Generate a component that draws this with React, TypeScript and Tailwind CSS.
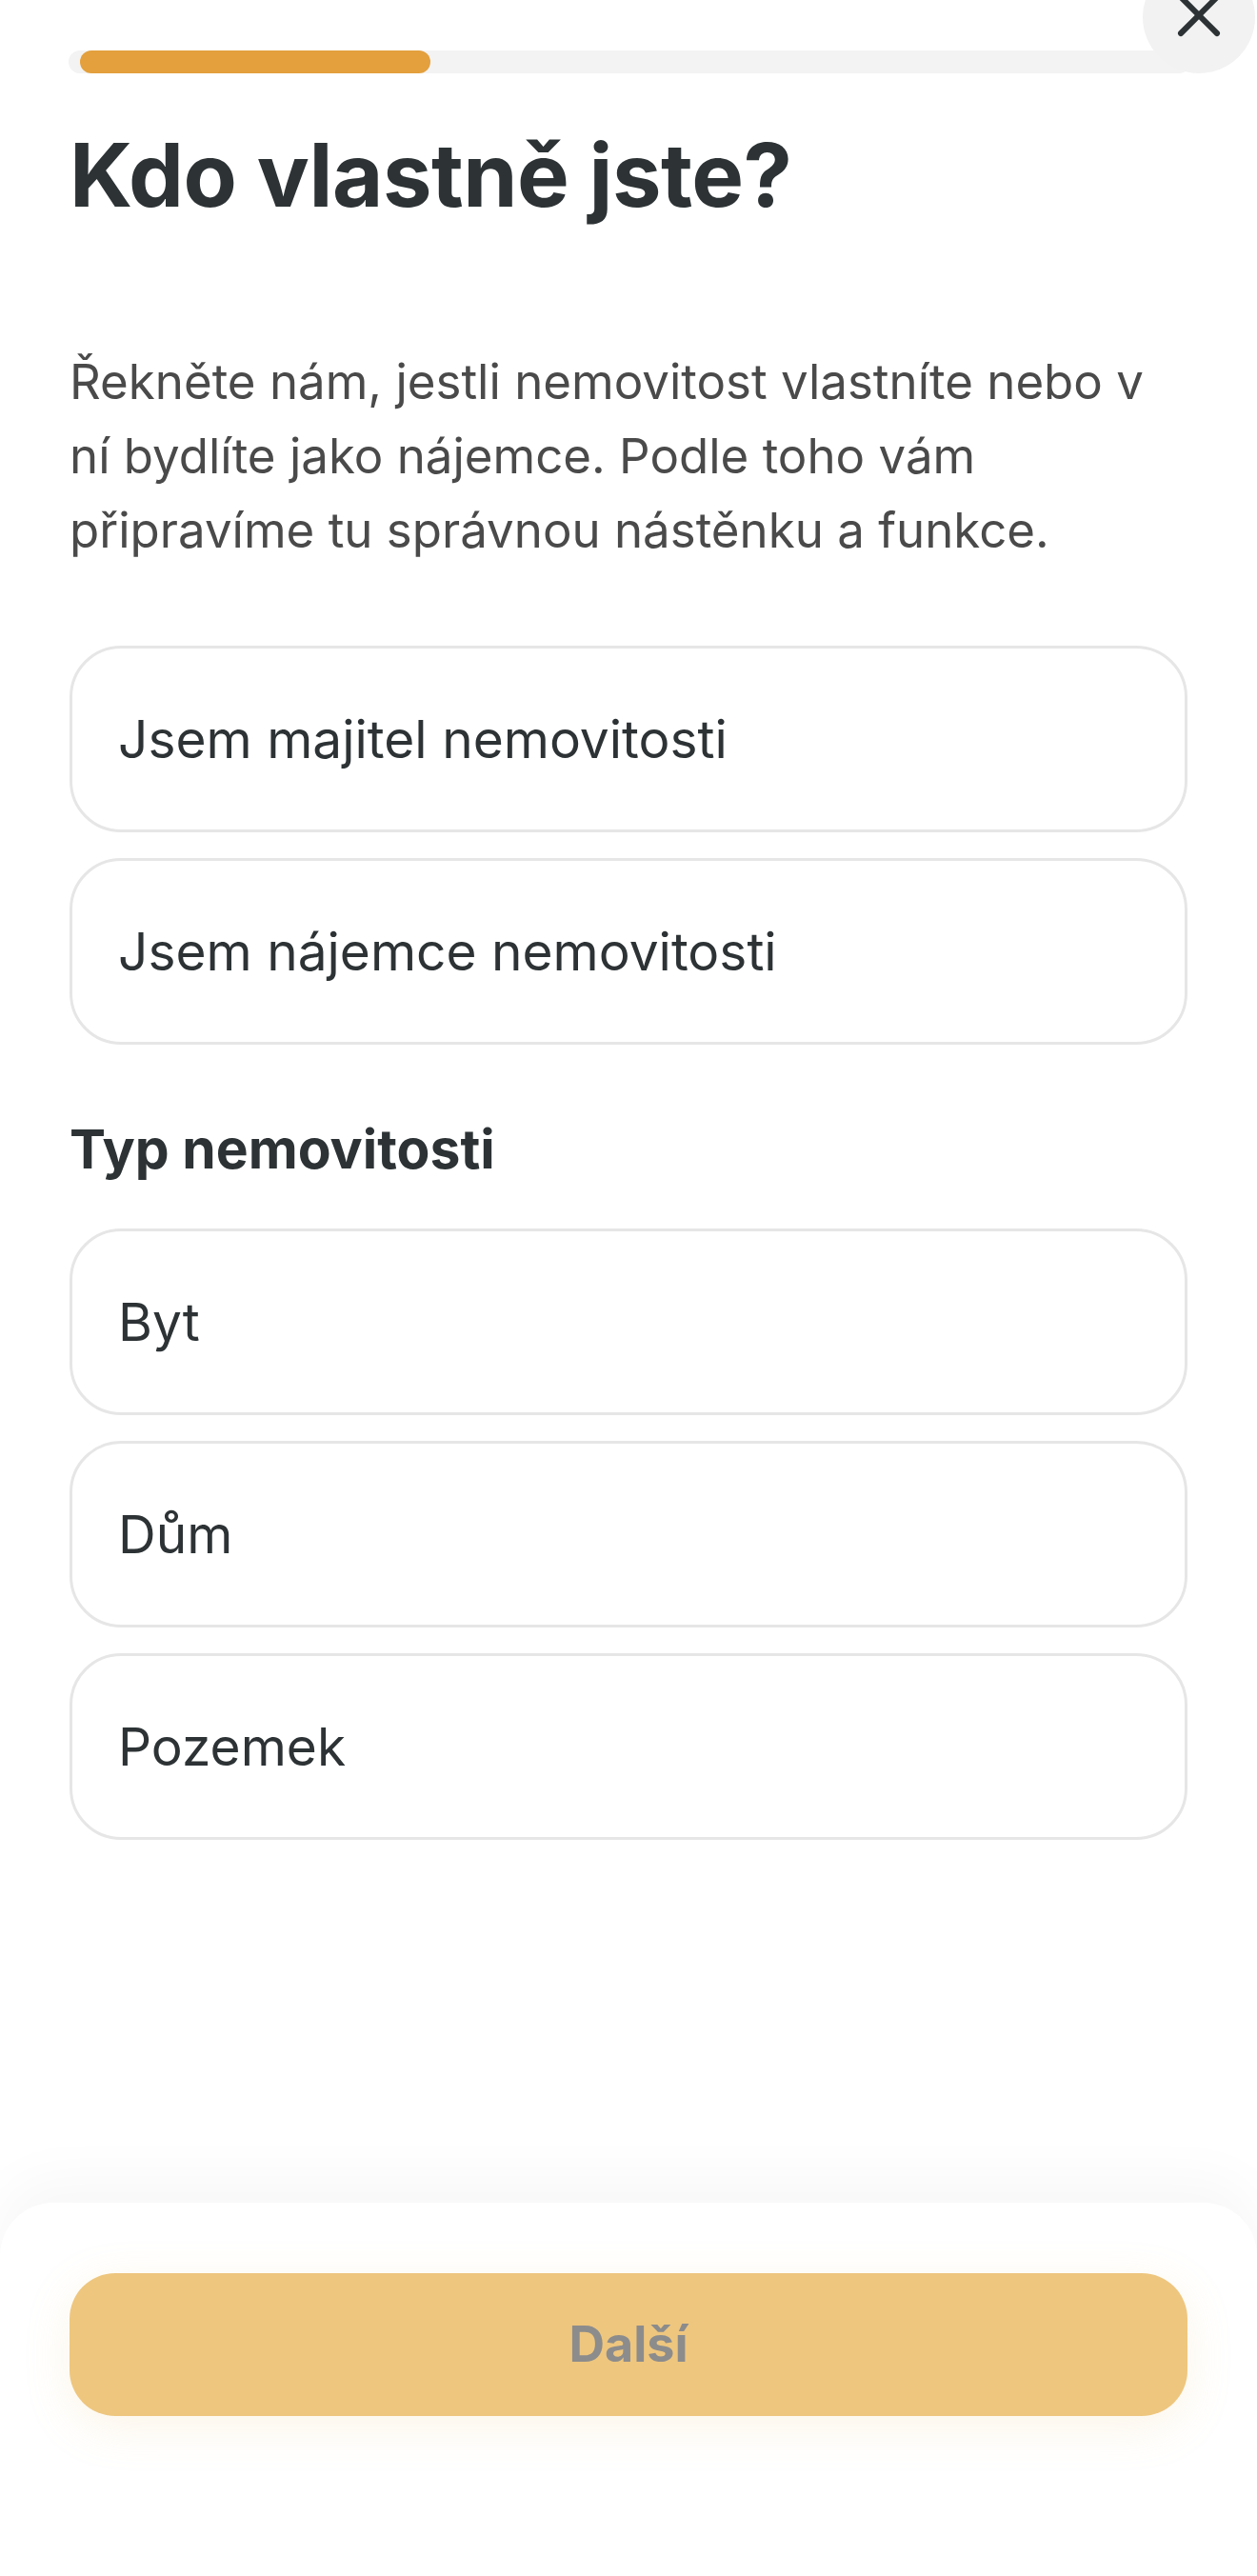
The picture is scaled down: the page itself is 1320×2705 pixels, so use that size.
import { X } from 'lucide-react';

const ownerOptions = ['Jsem majitel nemovitosti', 'Jsem nájemce nemovitosti'];
const propertyTypes = ['Byt', 'Dům', 'Pozemek'];

function OptionCard({ label }: { label: string }) {
  return (
    <button
      type="button"
      className="flex h-[196px] w-full items-center rounded-[54px] border-[3px] border-[#e6e6e6] bg-white px-[48px] text-left text-[55px] leading-none text-[#2d3335]"
    >
      {label}
    </button>
  );
}

export default function App() {
  return (
    <div className="relative flex min-h-[2705px] w-[1320px] flex-col overflow-hidden bg-white font-['Inter','Noto_Sans',sans-serif]">
      {/* close button */}
      <button
        type="button"
        className="absolute left-[1200px] top-[-41px] z-10 flex h-[118px] w-[118px] items-center justify-center rounded-full bg-[#f2f2f2] pb-[4px] text-[#2d3335]"
      >
        <X size={76} strokeWidth={1.9} />
      </button>

      {/* progress */}
      <div className="ml-[72px] mr-[70px] mt-[53px] h-[24px] rounded-full bg-[#f3f3f3]">
        <div className="ml-[12px] h-full w-[368px] rounded-full bg-[#e3a03d]" />
      </div>

      <main className="flex flex-col px-[73px]">
        <h1 className="mt-[61px] text-[92px] font-bold leading-none tracking-[-0.5px] text-[#2d3335]">
          Kdo vlastně jste?
        </h1>

        <p className="mt-[132px] text-[51px] leading-[78px] text-[#4a4a4a]">
          Řekněte nám, jestli nemovitost vlastníte nebo v ní bydlíte jako nájemce. Podle toho vám
          připravíme tu správnou nástěnku a funkce.
        </p>

        <div className="mt-[82px] flex flex-col gap-[27px]">
          {ownerOptions.map((o) => (
            <OptionCard key={o} label={o} />
          ))}
        </div>

        <h2 className="mt-[81px] text-[57px] font-bold leading-none text-[#2d3335]">
          Typ nemovitosti
        </h2>

        <div className="mt-[55px] flex flex-col gap-[27px]">
          {propertyTypes.map((t) => (
            <OptionCard key={t} label={t} />
          ))}
        </div>
      </main>

      <footer className="mt-auto h-[392px] rounded-t-[56px] bg-white px-[73px] pt-[74px] shadow-[0_-24px_60px_rgba(0,0,0,0.035)]">
        <button
          type="button"
          className="flex h-[150px] w-full items-center justify-center rounded-[48px] bg-[#eec67e] text-[52px] font-bold text-[#8c8c8c] shadow-[0_12px_48px_rgba(238,198,126,0.18)]"
        >
          Další
        </button>
      </footer>
    </div>
  );
}
